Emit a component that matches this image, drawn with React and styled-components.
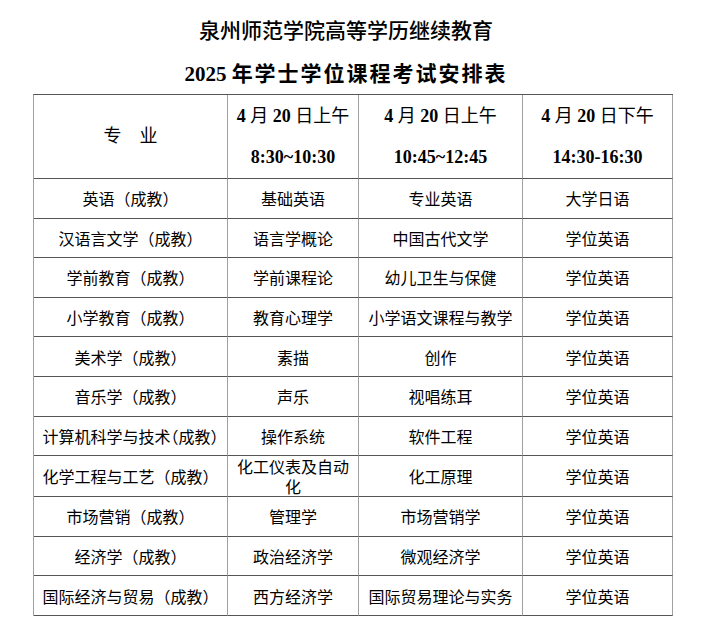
import React from "react";
import styled, { createGlobalStyle } from "styled-components";

const GlobalStyle = createGlobalStyle`
  body {
    margin: 0;
    background: #fff;
    color: #000;
    font-family: "Noto Sans CJK SC", "Noto Sans", sans-serif;
  }
`;

const Page = styled.div`
  padding: 9px 0 0 33px;
`;

const TitleBlock = styled.div`
  width: 626px;
  text-align: center;
`;

const TitleMain = styled.div`
  font-family: "Noto Sans CJK SC", sans-serif;
  font-size: 21px;
  font-weight: 500;
  line-height: 41px;
`;

const TitleSub = styled.div`
  padding-top: 4px;
  font-family: "Liberation Serif", "Noto Sans CJK SC", serif;
  font-size: 21px;
  font-weight: 700;
  line-height: 40px;
`;

const Spaced = styled.span`
  letter-spacing: 2px;
`;

const Table = styled.table`
  width: 639px;
  table-layout: fixed;
  border-collapse: separate;
  border-spacing: 0;
  border-top: 1px solid #555;
  border-left: 1px solid #a0a0a0;
`;

const Col = styled.col`
  width: ${(p) => p.$w}px;
`;

const HeadRow = styled.tr`
  height: 84px;
`;

const Row = styled.tr`
  height: 39.6px;
`;

const HeadCell = styled.th`
  padding: 0;
  font-family: "Liberation Serif", "Noto Sans CJK SC", serif;
  font-size: 18px;
  font-weight: 400;
  line-height: 41px;
  text-align: center;
  border-right: 1px solid #a0a0a0;
  border-bottom: 1px solid #555;
`;

const Num = styled.b`
  font-family: "Liberation Serif", serif;
  font-weight: 700;
`;

const Cell = styled.td`
  padding: 0 5px;
  font-size: 16px;
  line-height: 20px;
  text-align: center;
  border-right: 1px solid #a0a0a0;
  border-bottom: 1px solid #555;
  font-feature-settings: ${(p) => (p.$tight ? '"halt"' : "normal")};
`;

const widths = [194, 131, 164, 150];

const sessions = [
  { day: "上午", time: "8:30~10:30" },
  { day: "上午", time: "10:45~12:45" },
  { day: "下午", time: "14:30-16:30" },
];

const rows = [
  ["英语（成教）", "基础英语", "专业英语", "大学日语"],
  ["汉语言文学（成教）", "语言学概论", "中国古代文学", "学位英语"],
  ["学前教育（成教）", "学前课程论", "幼儿卫生与保健", "学位英语"],
  ["小学教育（成教）", "教育心理学", "小学语文课程与教学", "学位英语"],
  ["美术学（成教）", "素描", "创作", "学位英语"],
  ["音乐学（成教）", "声乐", "视唱练耳", "学位英语"],
  ["计算机科学与技术（成教）", "操作系统", "软件工程", "学位英语"],
  ["化学工程与工艺（成教）", "化工仪表及自动化", "化工原理", "学位英语"],
  ["市场营销（成教）", "管理学", "市场营销学", "学位英语"],
  ["经济学（成教）", "政治经济学", "微观经济学", "学位英语"],
  ["国际经济与贸易（成教）", "西方经济学", "国际贸易理论与实务", "学位英语"],
];

export default function App() {
  return (
    <>
      <GlobalStyle />
      <Page>
        <TitleBlock>
          <TitleMain>泉州师范学院高等学历继续教育</TitleMain>
          <TitleSub>
            2025 <Spaced>年学士学位课程考试安排表</Spaced>
          </TitleSub>
        </TitleBlock>
        <Table>
          <colgroup>
            {widths.map((w, i) => (
              <Col key={i} $w={w} />
            ))}
          </colgroup>
          <thead>
            <HeadRow>
              <HeadCell>专　业</HeadCell>
              {sessions.map((s, i) => (
                <HeadCell key={i}>
                  <Num>4</Num> 月 <Num>20</Num> 日{s.day}
                  <br />
                  <Num>{s.time}</Num>
                </HeadCell>
              ))}
            </HeadRow>
          </thead>
          <tbody>
            {rows.map((r) => (
              <Row key={r[0]}>
                {r.map((text, i) => (
                  <Cell key={i} $tight={text.length > 11}>
                    {text}
                  </Cell>
                ))}
              </Row>
            ))}
          </tbody>
        </Table>
      </Page>
    </>
  );
}
